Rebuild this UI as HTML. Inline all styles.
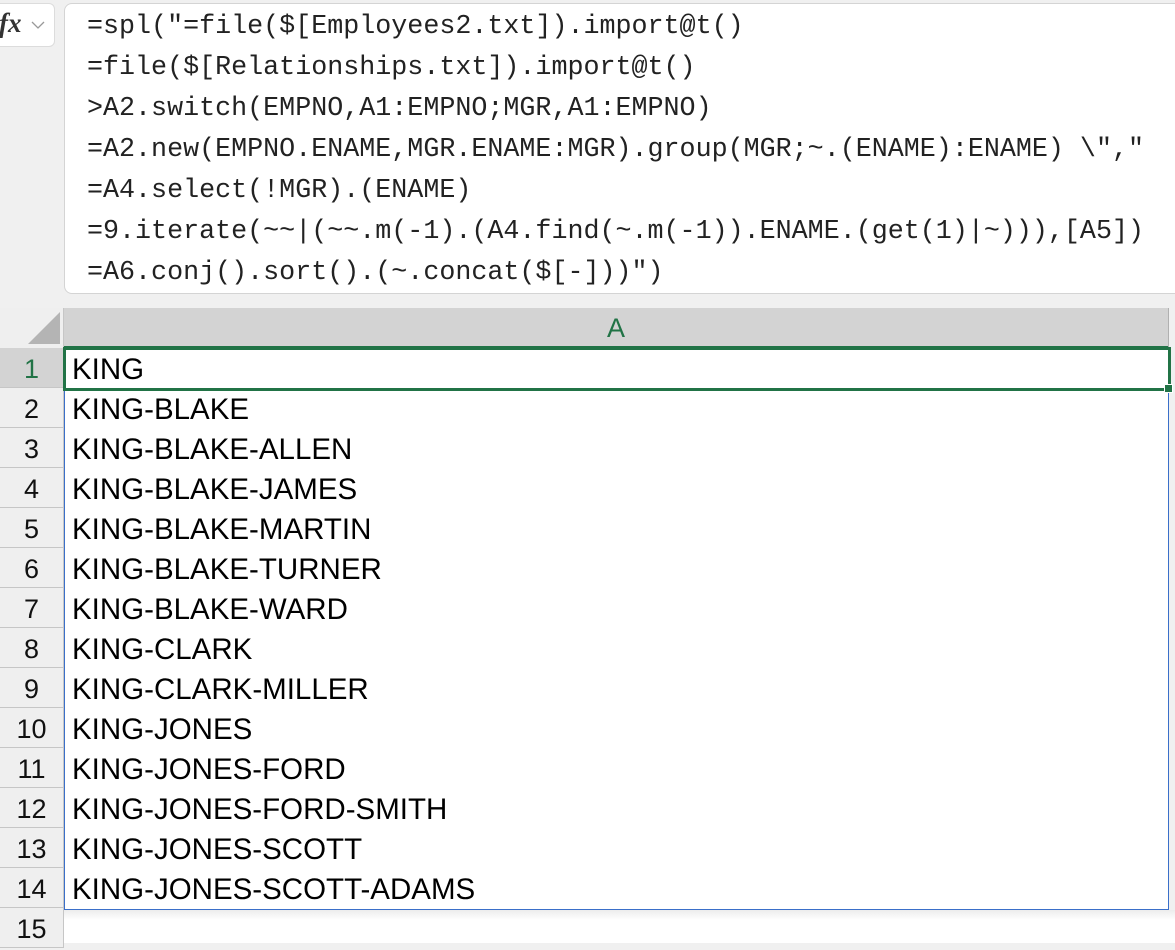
<!DOCTYPE html>
<html><head><style>
*{margin:0;padding:0;box-sizing:border-box}
body{width:1175px;height:943px;background:#f0f0f0;position:relative;overflow:hidden;font-family:"Liberation Sans",sans-serif}
.fx{position:absolute;left:-8px;top:3px;width:63px;height:44px;background:#fff;border:1px solid #dcdcdc;border-radius:6px}
.fx i{position:absolute;left:6px;top:4px;font:italic bold 27px "Liberation Serif",serif;color:#333}
.fbox{position:absolute;left:64px;top:3px;width:1120px;height:291px;background:#fff;border:1px solid #d4d4d4;border-radius:8px}
.code{position:absolute;left:22px;top:3px;font:26.7px/41px "Liberation Mono",monospace;color:#222;white-space:pre}
.corner{position:absolute;left:0;top:308px;width:64px;height:40px;background:#efefef;border-right:1px solid #c6c6c6}
.colh{position:absolute;left:64px;top:308px;width:1105px;height:39px;background:#d3d3d3;border-right:1px solid #b0b0b0;color:#217346;font-size:27px;text-align:center;line-height:40px}
.colh:after{content:"";position:absolute;left:0;right:0;bottom:-2px;height:3px;background:#217346}
.rowh{position:absolute;left:0;width:64px;height:40px;border-right:1px solid #c6c6c6;border-bottom:1px solid #c6c6c6;background:#efefef;text-align:center;font-size:27px;line-height:42px;color:#111}
.cells{position:absolute;left:64px;top:348px;width:1105px;height:562px;background:#fff;border:1px solid #3a6fc9;border-top:none}
.cell{position:absolute;left:7px;font-size:29.5px;line-height:43px;color:#000;white-space:nowrap}
.sel{position:absolute;left:63px;top:347px;width:1108px;height:44px;border:3px solid #217346}
.handle{position:absolute;left:1164px;top:384px;width:9px;height:9px;background:#217346;border:1px solid #fff}
.below{position:absolute;left:64px;top:910px;width:1111px;height:33px;background:linear-gradient(#ececec,#fff 30%)}
</style></head><body>
<div class="fx"><i>fx</i><svg style="position:absolute;left:38px;top:17px" width="14" height="9"><path d="M1 1 L7 7 L13 1" fill="none" stroke="#999" stroke-width="1.3"/></svg></div>
<div class="fbox"><div class="code">=spl("=file($[Employees2.txt]).import@t()
=file($[Relationships.txt]).import@t()
>A2.switch(EMPNO,A1:EMPNO;MGR,A1:EMPNO)
=A2.new(EMPNO.ENAME,MGR.ENAME:MGR).group(MGR;~.(ENAME):ENAME) \","
=A4.select(!MGR).(ENAME)
=9.iterate(~~|(~~.m(-1).(A4.find(~.m(-1)).ENAME.(get(1)|~))),[A5])
=A6.conj().sort().(~.concat($[-]))")</div></div>
<div class="corner"><svg width="64" height="40"><path d="M28 36 L60 36 L60 4 Z" fill="#b4b4b4"/></svg></div>
<div class="colh">A</div>
<div class="below"></div>
<div class="cells">
<div class="cell" style="top:0">KING</div>
<div class="cell" style="top:40px">KING-BLAKE</div>
<div class="cell" style="top:80px">KING-BLAKE-ALLEN</div>
<div class="cell" style="top:120px">KING-BLAKE-JAMES</div>
<div class="cell" style="top:160px">KING-BLAKE-MARTIN</div>
<div class="cell" style="top:200px">KING-BLAKE-TURNER</div>
<div class="cell" style="top:240px">KING-BLAKE-WARD</div>
<div class="cell" style="top:280px">KING-CLARK</div>
<div class="cell" style="top:320px">KING-CLARK-MILLER</div>
<div class="cell" style="top:360px">KING-JONES</div>
<div class="cell" style="top:400px">KING-JONES-FORD</div>
<div class="cell" style="top:440px">KING-JONES-FORD-SMITH</div>
<div class="cell" style="top:480px">KING-JONES-SCOTT</div>
<div class="cell" style="top:520px">KING-JONES-SCOTT-ADAMS</div>
</div>
<div class="rowh" style="top:348px;background:#d3d3d3;color:#217346">1</div>
<div class="rowh" style="top:388px">2</div>
<div class="rowh" style="top:428px">3</div>
<div class="rowh" style="top:468px">4</div>
<div class="rowh" style="top:508px">5</div>
<div class="rowh" style="top:548px">6</div>
<div class="rowh" style="top:588px">7</div>
<div class="rowh" style="top:628px">8</div>
<div class="rowh" style="top:668px">9</div>
<div class="rowh" style="top:708px">10</div>
<div class="rowh" style="top:748px">11</div>
<div class="rowh" style="top:788px">12</div>
<div class="rowh" style="top:828px">13</div>
<div class="rowh" style="top:868px">14</div>
<div class="rowh" style="top:908px">15</div>
<div class="sel"></div>
<div class="handle"></div>
</body></html>
